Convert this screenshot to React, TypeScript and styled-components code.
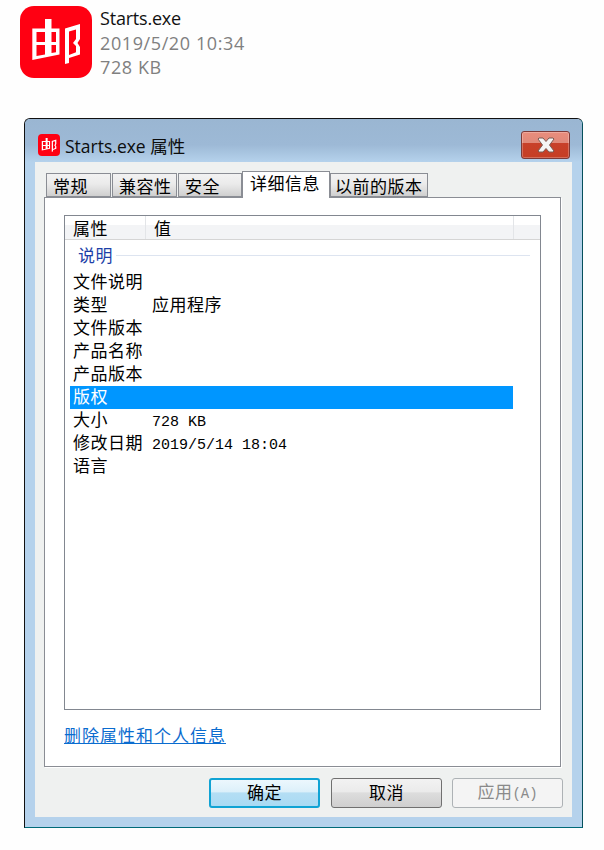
import styled, { createGlobalStyle } from 'styled-components';

const GlobalStyle = createGlobalStyle`
	html, body {
		margin: 0;
		padding: 0;
		background: #fefefe;
	}
	body {
		font-family: "Noto Sans CJK SC", "Liberation Sans", sans-serif;
		color: #000;
	}
`;

const MONO = '"Liberation Mono", "Noto Sans CJK SC", monospace';

type Row = { label: string; value?: string; mono?: boolean; selected?: boolean };

const rows: Row[] = [
	{ label: '文件说明' },
	{ label: '类型', value: '应用程序' },
	{ label: '文件版本' },
	{ label: '产品名称' },
	{ label: '产品版本' },
	{ label: '版权', selected: true },
	{ label: '大小', value: '728 KB', mono: true },
	{ label: '修改日期', value: '2019/5/14 18:04', mono: true },
	{ label: '语言' },
];

const tabs = [
	{ label: '常规', width: 65, gap: 1, pad: 6 },
	{ label: '兼容性', width: 65, gap: 1, pad: 6 },
	{ label: '安全', width: 64, gap: 0, pad: 6 },
	{ label: '详细信息', width: 88, gap: 0, pad: 7, active: true },
	{ label: '以前的版本', width: 98, gap: 0, pad: 4 },
];

function Logo({ size }: { size: number }) {
	return (
		<LogoBox $size={size}>
			<svg width={size} height={size} viewBox="0 0 72 72">
				<path
					fill="#fff"
					fillRule="evenodd"
					d="M25 13h6.500v9.500h8v26L12.300 54V22.500H25zM16.500 26v10H25V26zM31.500 26v10H36V26zM16.500 39v11l8.500-1.600V39zM31.500 39v8l4.500-.8V39z"
				/>
				<path
					fill="#fff"
					fillRule="evenodd"
					d="M45 22.500L60 18v15l-2.500 4 2.500 4v7.500L49 52v5l-4 1zM49 25.500V49l7-2.800V40l-3-3 3-4v-9.500z"
				/>
			</svg>
		</LogoBox>
	);
}

export default function App() {
	return (
		<Page>
			<GlobalStyle />
			<FileHeader>
				<Logo size={72} />
				<FileMeta>
					<FileName>Starts.exe</FileName>
					<FileDetail>2019/5/20 10:34</FileDetail>
					<FileDetail>728 KB</FileDetail>
				</FileMeta>
			</FileHeader>
			<Window>
				<TitleBar>
					<Logo size={22} />
					<TitleText>Starts.exe 属性</TitleText>
					<CloseButton aria-label="关闭">
						<svg width="22" height="16" viewBox="0 0 22 16">
							<path
								d="M4 1h4l3 3.500L14 1h4l1 1-4.500 6 4.500 6-1 1h-4l-3-3.500L8 15H4l-1-1 4.500-6L3 2z"
								fill="#f4f4f4"
								stroke="#7c5a52"
								strokeWidth="1"
							/>
						</svg>
					</CloseButton>
				</TitleBar>
				<Client>
					<TabRow>
						{tabs.map((tab) => (
							<Tab key={tab.label} $active={!!tab.active} $width={tab.width} $gap={tab.gap} $pad={tab.pad}>
								{tab.label}
							</Tab>
						))}
					</TabRow>
					<Panel>
						<ListView>
							<ListHeader>
								<HeaderCell $width={81}>属性</HeaderCell>
								<HeaderCell $width={368}>值</HeaderCell>
								<HeaderCell $width={27} />
							</ListHeader>
							<GroupRow>
								<GroupLabel>说明</GroupLabel>
								<GroupLine />
							</GroupRow>
							{rows.map((row) => (
								<ListRow key={row.label} $selected={!!row.selected}>
									<NameCell>{row.label}</NameCell>
									{row.value && <ValueCell $mono={!!row.mono}>{row.value}</ValueCell>}
								</ListRow>
							))}
						</ListView>
						<RemoveLink href="#">删除属性和个人信息</RemoveLink>
					</Panel>
					<Footer>
						<DialogButton $variant="primary">确定</DialogButton>
						<DialogButton $variant="normal">取消</DialogButton>
						<DialogButton $variant="disabled" disabled>
							应用<Accel>(A)</Accel>
						</DialogButton>
					</Footer>
				</Client>
			</Window>
		</Page>
	);
}

const Page = styled.div`
	width: 604px;
	height: 850px;
	box-sizing: border-box;
	padding: 6px 0 0 20px;
	overflow: hidden;
`;

const FileHeader = styled.div`
	display: flex;
	gap: 8px;
	height: 72px;
`;

const LogoBox = styled.div<{ $size: number }>`
	width: ${({ $size }) => $size}px;
	height: ${({ $size }) => $size}px;
	flex: none;
	border-radius: ${({ $size }) => Math.round($size * 0.19)}px;
	background: #ff0012;
	overflow: hidden;
	svg {
		display: block;
	}
`;

const FileMeta = styled.div`
	display: flex;
	flex-direction: column;
	font-family: "Open Sans", sans-serif;
	font-size: 18px;
	line-height: 24.500px;
`;

const FileName = styled.div`
	color: #111;
	letter-spacing: -0.2px;
`;

const FileDetail = styled.div`
	color: #808080;
	letter-spacing: 0.6px;
`;

const Window = styled.div`
	width: 559px;
	height: 710px;
	box-sizing: border-box;
	margin: 40px 0 0 4px;
	display: flex;
	flex-direction: column;
	border: 1px solid #111;
	border-right-color: #06505c;
	border-bottom-color: #006a78;
	border-radius: 6px 6px 0 0;
	background: #b5d2ec;
`;

const TitleBar = styled.div`
	height: 43px;
	flex: none;
	box-sizing: border-box;
	padding: 9px 12px 0 13px;
	display: flex;
	align-items: center;
	border-radius: 5px 5px 0 0;
	background: linear-gradient(#9ab6d2 0%, #9db9d6 60%, #b5d2ec 100%);
`;

const TitleText = styled.div`
	margin-left: 5px;
	font-family: "Open Sans", "Noto Sans CJK SC", sans-serif;
	font-size: 17.500px;
	color: #0c0c0c;
`;

const CloseButton = styled.button`
	width: 49px;
	height: 28px;
	margin-left: auto;
	padding: 0;
	display: flex;
	align-items: center;
	justify-content: center;
	border: 1px solid #7d3a38;
	border-radius: 3px;
	background: linear-gradient(#e98d7c 0%, #e0897a 42%, #c8402a 43%, #c63e24 100%);
	box-shadow: inset 0 0 0 1px rgba(255, 255, 255, 0.25);
`;

const Client = styled.div`
	flex: 1;
	margin: 0 10px 10px;
	box-sizing: border-box;
	padding: 11px 9px 0;
	background: #eff1f0;
`;

const TabRow = styled.div`
	height: 24px;
	margin-left: 2px;
	display: flex;
	align-items: flex-end;
`;

const Tab = styled.div<{ $active: boolean; $width: number; $gap: number; $pad: number }>`
	position: relative;
	width: ${({ $width }) => $width}px;
	height: ${({ $active }) => ($active ? 27 : 24)}px;
	margin-bottom: ${({ $active }) => ($active ? -1 : 0)}px;
	margin-right: ${({ $gap }) => $gap}px;
	padding-left: ${({ $pad }) => $pad}px;
	z-index: ${({ $active }) => ($active ? 1 : 0)};
	box-sizing: border-box;
	border: 1px solid #8a8d94;
	border-bottom: ${({ $active }) => ($active ? 'none' : '1px solid #8a8d94')};
	background: ${({ $active }) => ($active ? '#fff' : 'linear-gradient(#f2f2f2 0%, #ebebeb 45%, #cfcfcf 100%)')};
	font-size: 17px;
	letter-spacing: 0.500px;
	line-height: ${({ $active }) => ($active ? 22 : 24)}px;
	white-space: nowrap;
`;

const Panel = styled.div`
	width: 517px;
	height: 570px;
	box-sizing: border-box;
	padding: 17px 19px 0;
	border: 1px solid #8a8d94;
	background: #fff;
	box-shadow: 1px 1px 0 #fff;
`;

const ListView = styled.div`
	height: 495px;
	box-sizing: border-box;
	border: 1px solid #828790;
	background: #fff;
`;

const ListHeader = styled.div`
	height: 24px;
	display: flex;
	box-sizing: border-box;
	border-bottom: 1px solid #d5d5d5;
	background: linear-gradient(#fff 0%, #fff 40%, #f3f4f6 41%, #f3f4f6 100%);
`;

const HeaderCell = styled.div<{ $width: number }>`
	width: ${({ $width }) => $width}px;
	flex: none;
	box-sizing: border-box;
	padding-left: 8px;
	border-right: 1px solid #e3e5e8;
	font-size: 17px;
	letter-spacing: 0.500px;
	line-height: 24px;
	&:last-child {
		border-right: none;
	}
`;

const GroupRow = styled.div`
	height: 31px;
	padding: 0 10px 0 13px;
	display: flex;
	align-items: flex-start;
	gap: 3px;
`;

const GroupLabel = styled.div`
	font-size: 17px;
	letter-spacing: 0.500px;
	line-height: 30px;
	color: #1d3fa8;
`;

const GroupLine = styled.div`
	flex: 1;
	height: 1px;
	margin-top: 15px;
	background: #dde4f0;
`;

const ListRow = styled.div<{ $selected: boolean }>`
	width: 443px;
	height: 23px;
	margin-left: 5px;
	display: flex;
	align-items: baseline;
	background: ${({ $selected }) => ($selected ? '#0096ff' : 'transparent')};
	color: ${({ $selected }) => ($selected ? '#fff' : '#000')};
	font-size: 17px;
	letter-spacing: 0.500px;
	line-height: 20px;
`;

const NameCell = styled.div`
	width: 82px;
	padding-left: 3px;
	flex: none;
	box-sizing: border-box;
	white-space: nowrap;
`;

const ValueCell = styled.div<{ $mono: boolean }>`
	font-family: ${({ $mono }) => ($mono ? MONO : 'inherit')};
	font-size: ${({ $mono }) => ($mono ? 15 : 17)}px;
	letter-spacing: ${({ $mono }) => ($mono ? 0 : 0.5)}px;
	white-space: nowrap;
`;

const RemoveLink = styled.a`
	display: inline-block;
	margin-top: 13px;
	font-size: 17px;
	letter-spacing: 1px;
	line-height: 24px;
	color: #0a6ccf;
	text-decoration: underline;
`;

const Footer = styled.div`
	margin-top: 11px;
	display: flex;
	gap: 10px;
	justify-content: flex-end;
`;

const buttonSkins = {
	primary: `
		margin-right: 1px;
		color: #000;
		border: 2px solid #10a3d4;
		background: linear-gradient(#ecf7fd 0%, #dcf0fa 45%, #b4def4 50%, #a9daf3 100%);
	`,
	normal: `
		color: #000;
		border: 1px solid #707070;
		background: linear-gradient(#f2f2f2 0%, #ebebeb 45%, #dddddd 50%, #cfcfcf 100%);
	`,
	disabled: `
		color: #8a8a8a;
		border: 1px solid #adb2b5;
		background: #f4f4f4;
	`,
};

const DialogButton = styled.button<{ $variant: keyof typeof buttonSkins }>`
	width: 111px;
	height: 30px;
	padding: 0 0 2px;
	box-sizing: border-box;
	border-radius: 3px;
	font-family: "Noto Sans CJK SC", sans-serif;
	font-size: 17px;
	line-height: 24px;
	letter-spacing: 0.500px;
	${({ $variant }) => buttonSkins[$variant]}
`;

const Accel = styled.span`
	font-family: ${MONO};
	font-size: 14px;
	letter-spacing: 0;
`;
